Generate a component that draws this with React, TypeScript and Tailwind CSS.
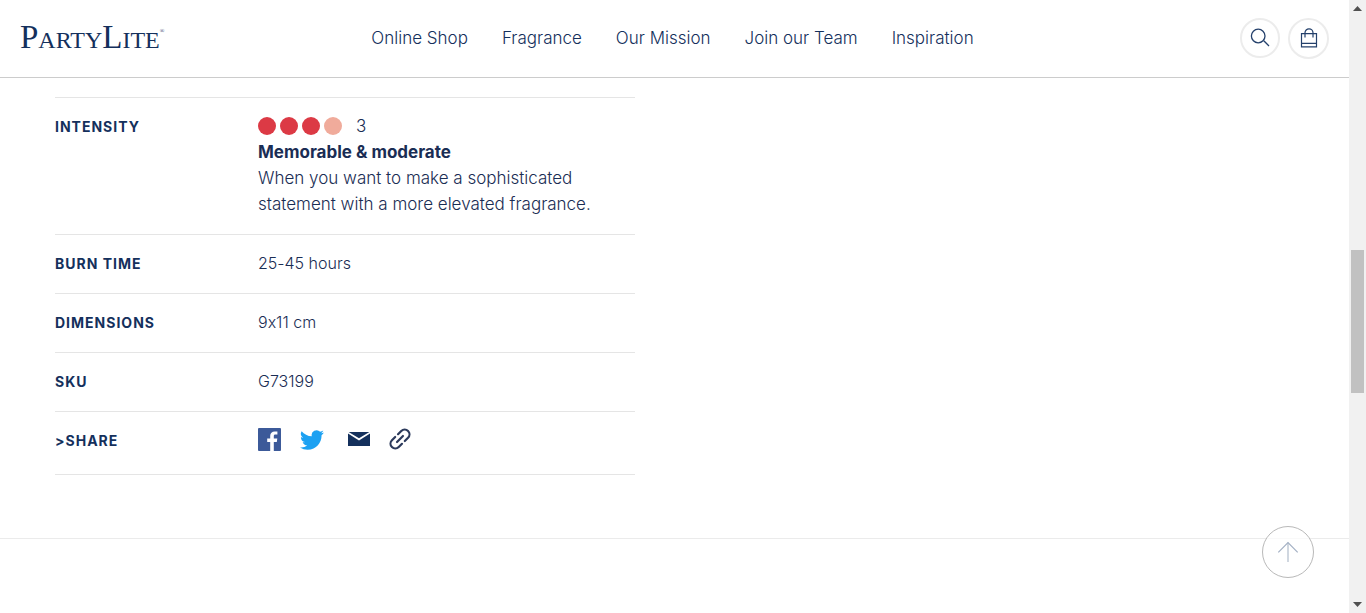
import type { ReactNode } from 'react';

const navItems = ['Online Shop', 'Fragrance', 'Our Mission', 'Join our Team', 'Inspiration'];

function Logo() {
  return (
    <a
      href="#home"
      aria-label="PartyLite"
      className="flex items-baseline justify-self-start font-['Liberation_Serif',serif] text-2xl leading-8 text-[#14305c]"
    >
      <span className="text-[33px]">P</span>
      <span>ARTY</span>
      <span className="text-[33px]">L</span>
      <span>ITE</span>
      <span className="self-start text-[6px] leading-5">®</span>
    </a>
  );
}

function Header() {
  return (
    <header className="grid h-[78px] shrink-0 grid-cols-[1fr_auto_1fr] items-center border-b border-[#cccccc] px-5 pb-px">
      <Logo />
      <nav className="flex gap-[34px] pt-0.5 pr-1 text-[17px] font-light text-[#14305c]">
        {navItems.map((item) => (
          <a key={item} href="#nav" className="whitespace-nowrap">
            {item}
          </a>
        ))}
      </nav>
      <div className="flex items-center gap-2 justify-self-end">
        <button aria-label="Search" className="flex size-10 items-center justify-center rounded-full border-2 border-[#ececec]">
          <svg width="20" height="20" viewBox="0 0 20 20" fill="none" stroke="#24406b" strokeWidth="1.3">
            <circle cx="8.2" cy="8" r="6.8" />
            <path d="M13.8 12.8 19 18" />
          </svg>
        </button>
        <button aria-label="Shopping bag" className="flex size-[41px] items-center justify-center rounded-full border-2 border-[#ececec]">
          <svg width="18" height="20" viewBox="0 0 18 20" fill="none" stroke="#24406b" strokeWidth="1.2">
            <path d="M1.5 5.6h15v13.2h-15zM1.5 15.3h15M5 9.5V4.8a4 4 0 0 1 8 0v4.7" />
          </svg>
        </button>
      </div>
    </header>
  );
}

function Row({ label, children }: { label: string; children: ReactNode }) {
  return (
    <tr className="border-y border-[#e5e5e5]">
      <th
        scope="row"
        className="w-[203px] py-4 text-left align-top text-sm leading-[26px] font-bold tracking-[1px] text-[#14305c]"
      >
        {label}
      </th>
      <td className="pt-[15px] pb-[17px] align-top text-base leading-[26px] font-light">{children}</td>
    </tr>
  );
}

function Intensity() {
  return (
    <div className="text-[17px]">
      <div className="flex items-center">
        <div className="flex gap-1">
          <span className="size-[18px] rounded-full bg-[#dc3a45]" />
          <span className="size-[18px] rounded-full bg-[#dc3a45]" />
          <span className="size-[18px] rounded-full bg-[#dc3a45]" />
          <span className="size-[18px] rounded-full bg-[#f0ab9b]" />
        </div>
        <span className="ml-3.5">3</span>
      </div>
      <strong className="block font-bold">Memorable &amp; moderate</strong>
      <p>
        When you want to make a sophisticated
        <br />
        statement with a more elevated fragrance.
      </p>
    </div>
  );
}

function Share() {
  return (
    <div className="flex h-[30px] items-start">
      <a href="#facebook" aria-label="Facebook">
        <svg width="23" height="24" viewBox="0 0 23 24">
          <rect x="0" y="1" width="23" height="23" rx="1" fill="#3c5a99" />
          <path
            fill="#fff"
            d="M12.2 24v-8.9h-3v-3.6h3V9c0-3 1.8-4.6 4.5-4.6 1.3 0 2.4.1 2.7.1v3.1h-1.8c-1.5 0-1.8.7-1.8 1.7v2.2h3.5l-.5 3.6h-3V24z"
          />
        </svg>
      </a>
      <a href="#twitter" aria-label="Twitter" className="ml-[19px] pt-px">
        <svg width="24" height="24" viewBox="0 0 24 24" fill="#1da1f2">
          <path d="M23.95 4.57a10 10 0 0 1-2.82.77 4.96 4.96 0 0 0 2.16-2.72c-.95.56-2 .96-3.12 1.18a4.92 4.92 0 0 0-8.38 4.48C7.69 8.1 4.07 6.13 1.64 3.16a4.92 4.92 0 0 0 1.52 6.57 4.9 4.9 0 0 1-2.23-.61v.06a4.92 4.92 0 0 0 3.95 4.83 5 5 0 0 1-2.21.08 4.94 4.94 0 0 0 4.6 3.42A9.87 9.87 0 0 1 0 19.54a13.94 13.94 0 0 0 7.55 2.21c9.05 0 14-7.5 14-13.98 0-.21 0-.42-.02-.63a9.94 9.94 0 0 0 2.42-2.57z" />
        </svg>
      </a>
      <a href="#email" aria-label="Email" className="ml-6 pt-px">
        <svg width="22" height="22" viewBox="0 0 22 22" fill="#14305c">
          <path d="M.6 4h20.8L11 10.2zM0 5.4l11 7 11-7V18H0z" />
        </svg>
      </a>
      <button aria-label="Copy link" className="ml-[18px]">
        <svg width="24" height="24" viewBox="0 0 24 24" fill="none" stroke="#2c3a5c" strokeWidth="2.2" strokeLinecap="round">
          <g transform="rotate(-45 12 12)">
            <path d="M10 7.2H5.4a4.8 4.8 0 0 0 0 9.6H10M14 7.2h4.6a4.8 4.8 0 0 1 0 9.6H14M7.8 12h8.4" />
          </g>
        </svg>
      </button>
    </div>
  );
}

function Scrollbar() {
  return (
    <div aria-hidden="true" className="flex w-[17px] shrink-0 flex-col items-center justify-between bg-[#f1f1f1] py-1.5">
      <svg width="9" height="5" viewBox="0 0 9 5" fill="#505050">
        <path d="M0 5 4.5 0 9 5z" />
      </svg>
      <div className="flex w-[13px] grow flex-col">
        <div className="grow-[239]" />
        <div className="grow-[143] bg-[#c1c1c1]" />
        <div className="grow-[209]" />
      </div>
      <svg width="9" height="5" viewBox="0 0 9 5" fill="#505050">
        <path d="M0 0h9L4.5 5z" />
      </svg>
    </div>
  );
}

export default function App() {
  return (
    <div className="flex min-h-screen bg-white font-[Inter,'Open_Sans',sans-serif] text-[#1a2d54] [font-variant-ligatures:no-contextual]">
      <div className="relative flex min-w-0 grow flex-col">
        <Header />
        <main className="grow">
          <section className="border-b border-[#ebebeb] px-[55px] pt-[19px] pb-[63px]">
            <table className="w-full max-w-[580px] border-collapse">
              <tbody>
                <Row label="INTENSITY">
                  <Intensity />
                </Row>
                <Row label="BURN TIME">25-45 hours</Row>
                <Row label="DIMENSIONS">9x11 cm</Row>
                <Row label="SKU">G73199</Row>
                <Row label=">SHARE">
                  <Share />
                </Row>
              </tbody>
            </table>
          </section>
        </main>
        <button
          aria-label="Back to top"
          className="absolute right-[35px] bottom-[35px] flex size-[52px] items-center justify-center rounded-full border border-[#b9b9b9] bg-white/70"
        >
          <svg width="22" height="22" viewBox="0 0 22 22" fill="none">
            <path d="M11 1.5V21" stroke="#d0d7e0" strokeWidth="2" />
            <path d="M1.3 11.3 11 1.6l9.7 9.7" stroke="#a3b0c4" strokeWidth="1.2" />
          </svg>
        </button>
      </div>
      <Scrollbar />
    </div>
  );
}
